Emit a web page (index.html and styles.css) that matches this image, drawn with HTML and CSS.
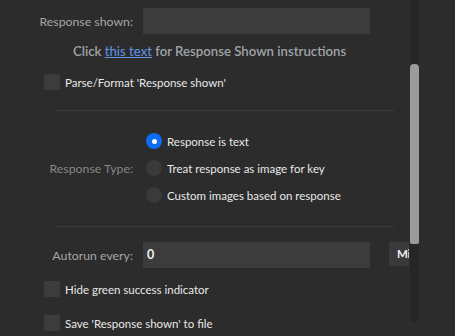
FILE: index.html
```html
<!DOCTYPE html>
<html>
<head>
<meta charset="utf-8">
<link rel="stylesheet" href="styles.css">
</head>
<body>
<div class="page">
  <div class="content">
    <div class="row first">
      <div class="label">Response shown:</div>
      <div class="input"></div>
    </div>
    <div class="hint">Click <a class="link">this text</a> for Response Shown instructions</div>
    <label class="check c1"><span class="box"></span><span>Parse/Format 'Response shown'</span></label>
    <div class="sep s1"></div>
    <div class="rtype">
      <div class="label dim">Response Type:</div>
      <div class="radios">
        <div class="radio"><span class="dot on"></span><span>Response is text</span></div>
        <div class="radio"><span class="dot"></span><span>Treat response as image for key</span></div>
        <div class="radio"><span class="dot"></span><span>Custom images based on response</span></div>
      </div>
    </div>
    <div class="sep s2"></div>
    <div class="row auto">
      <div class="label">Autorun every:</div>
      <div class="input val">0</div>
      <div class="btn">Minutes</div>
    </div>
    <label class="check c2"><span class="box"></span><span>Hide green success indicator</span></label>
    <label class="check c3"><span class="box"></span><span>Save 'Response shown' to file</span></label>
  </div>
  <div class="scroll"><div class="thumb"></div></div>
</div>
</body>
</html>
```
FILE: styles.css
```css
html, body {
  margin: 0;
  padding: 0;
  background: #2c2c2c;
  overflow: hidden;
}
body {
  font-family: "Lato", "Noto Sans", sans-serif;
  width: 455px;
  height: 336px;
}
.page {
  display: flex;
  height: 336px;
}
.content {
  width: 409px;
  flex: none;
  overflow: hidden;
  padding-top: 8px;
  box-sizing: border-box;
}
.row {
  display: flex;
  align-items: center;
  height: 26px;
}
.label {
  width: 133px;
  flex: none;
  text-align: right;
  color: #a6a6a6;
  font-size: 12.3px;
  padding-right: 10px;
  box-sizing: content-box;
  white-space: nowrap;
}
.label.dim { color: #888888; }
.input {
  width: 227px;
  height: 26px;
  flex: none;
  background: #3c3c3c;
  box-sizing: border-box;
}
.input.val {
  color: #f2f2f2;
  font-size: 12.5px;
  font-weight: 700;
  padding-left: 4px;
  line-height: 26px;
}
.btn {
  margin-left: 19px;
  height: 24px;
  align-self: flex-start;
  background: #3a3a3a;
  color: #f2f2f2;
  font-size: 11.5px;
  font-weight: 700;
  letter-spacing: -0.4px;
  line-height: 24px;
  padding-left: 8px;
  white-space: nowrap;
  flex: none;
}
.hint {
  margin-top: 8px;
  padding-left: 73px;
  color: #a0a4a8;
  font-size: 13.2px;
  font-weight: 600;
  height: 18px;
  line-height: 18px;
  white-space: nowrap;
}
.link {
  color: #5f97e6;
  text-decoration: underline;
  font-weight: 400;
}
.check {
  display: flex;
  align-items: center;
  margin-left: 44px;
  color: #e8e8e8;
  font-size: 11.5px;
  height: 16px;
  gap: 5px;
  white-space: nowrap;
}
.box {
  width: 16px;
  height: 16px;
  background: #3c3c3c;
  border-radius: 2px;
  flex: none;
}
.c1 { margin-top: 14px; }
.sep {
  margin-left: 56px;
  width: 338px;
  height: 1px;
  background: #3d3d3d;
}
.s1 { margin-top: 20px; }
.s2 { margin-top: 23px; }
.rtype {
  display: flex;
  align-items: center;
  margin-top: 22px;
}
.radios {
  display: flex;
  flex-direction: column;
  gap: 11px;
  margin-left: 3px;
}
.radio {
  display: flex;
  align-items: center;
  gap: 5px;
  color: #e8e8e8;
  font-size: 11.5px;
  height: 16px;
  white-space: nowrap;
}
.dot {
  width: 16px;
  height: 16px;
  border-radius: 50%;
  background: #3a3a3a;
  flex: none;
  position: relative;
}
.dot.on {
  background: #0c6cf2;
}
.dot.on::after {
  content: "";
  position: absolute;
  left: 5.5px;
  top: 5.5px;
  width: 5px;
  height: 5px;
  border-radius: 50%;
  background: #fff;
}
.auto { margin-top: 15px; }
.c2 { margin-top: 13px; }
.c3 { margin-top: 18px; }
.scroll {
  width: 9px;
  height: 322px;
  margin-left: 1px;
  background: #262626;
  border-radius: 0 0 5px 5px;
  padding-top: 64px;
  box-sizing: border-box;
  flex: none;
}
.thumb {
  height: 180px;
  background: #9b9b9b;
  border-radius: 4px 4px 2px 2px;
}
```
